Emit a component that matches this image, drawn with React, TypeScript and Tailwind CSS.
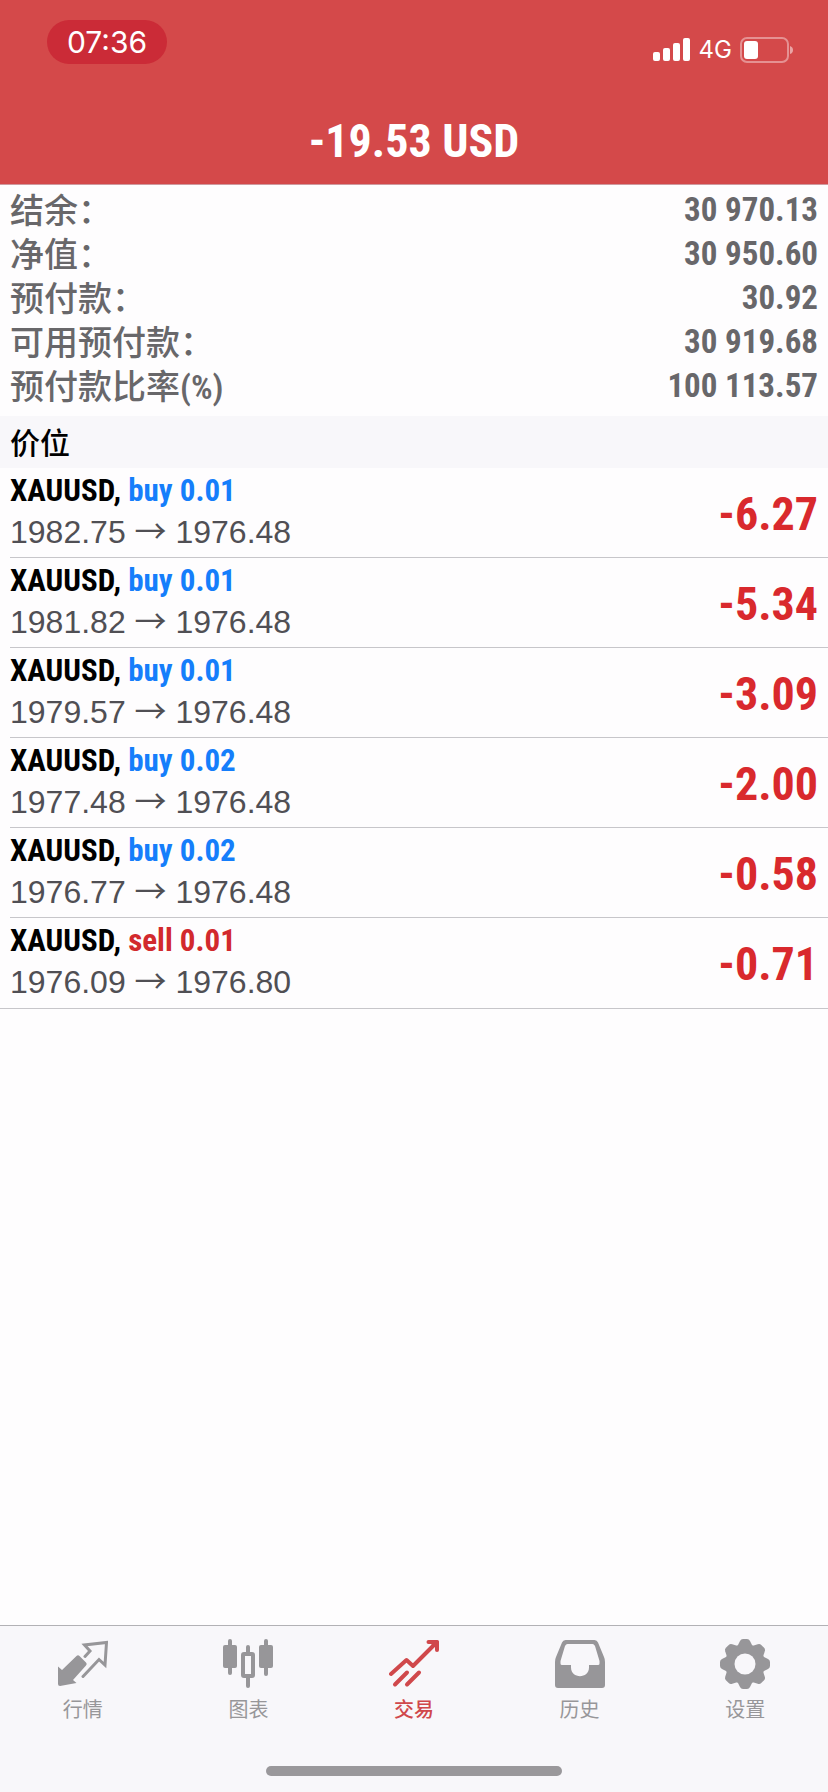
import type { ReactNode } from 'react'
import clsx from 'clsx'

const summary = [
  { label: '结余：', value: '30 970.13' },
  { label: '净值：', value: '30 950.60' },
  { label: '预付款：', value: '30.92' },
  { label: '可用预付款：', value: '30 919.68' },
  { label: '预付款比率', unit: '(%)', value: '100 113.57' },
]

const positions = [
  { id: 1, symbol: 'XAUUSD', side: 'buy', volume: '0.01', open: '1982.75', current: '1976.48', profit: '-6.27' },
  { id: 2, symbol: 'XAUUSD', side: 'buy', volume: '0.01', open: '1981.82', current: '1976.48', profit: '-5.34' },
  { id: 3, symbol: 'XAUUSD', side: 'buy', volume: '0.01', open: '1979.57', current: '1976.48', profit: '-3.09' },
  { id: 4, symbol: 'XAUUSD', side: 'buy', volume: '0.02', open: '1977.48', current: '1976.48', profit: '-2.00' },
  { id: 5, symbol: 'XAUUSD', side: 'buy', volume: '0.02', open: '1976.77', current: '1976.48', profit: '-0.58' },
  { id: 6, symbol: 'XAUUSD', side: 'sell', volume: '0.01', open: '1976.09', current: '1976.80', profit: '-0.71' },
]

function Icon({ children }: { children: ReactNode }) {
  return (
    <svg viewBox="0 0 50 50" className="h-[50px] w-[50px]" fill="currentColor" aria-hidden="true">
      {children}
    </svg>
  )
}

const QuotesIcon = () => (
  <Icon>
    <path d="M0 27.5 4 31 18.5 17Q20 15.5 21.5 17L28 23.5Q29.5 25 28 26.5L15 41 18.5 44 2 47Q0 47 0 45Z" />
    <path
      d="M27 17.5 32 12 26.5 6 48.5 3.5 47 26 41 20.5 25 37.5"
      fill="none"
      stroke="currentColor"
      strokeWidth="3"
      strokeLinecap="round"
    />
  </Icon>
)

const ChartIcon = () => (
  <Icon>
    <rect x="5" y="0" width="4" height="36" rx="2" />
    <rect x="0" y="6" width="14" height="23" rx="2" />
    <rect x="41" y="0" width="4" height="37" rx="2" />
    <rect x="36" y="6" width="14" height="23" rx="2" />
    <rect x="23" y="6" width="4" height="9" rx="2" />
    <rect x="23" y="36" width="4" height="13" rx="2" />
    <rect x="20" y="15" width="10" height="22" rx="1" fill="none" stroke="currentColor" strokeWidth="4" />
  </Icon>
)

const TradeIcon = () => (
  <Icon>
    <g fill="none" stroke="currentColor" strokeWidth="4" strokeLinecap="round" strokeLinejoin="round">
      <path d="M2 35 17.5 21 24 27 46 5" />
      <path d="M6 45.5 18 33.5M18 45.5 30 33.5" />
    </g>
    <path d="M39.5 1H48.5Q50 1 50 2.5V11Q50 13 48 13T46 11V8L42 5H39.5Q37.5 5 37.5 3T39.5 1Z" />
  </Icon>
)

const HistoryIcon = () => (
  <Icon>
    <path
      fillRule="evenodd"
      d="M10.5 1H39.5Q42 1 43 3.5L49 18Q50 20 50 23V46Q50 49 47 49H3Q0 49 0 46V23Q0 20 1 18L7 3.5Q8 1 10.5 1ZM12.5 5Q11 5 10 7L5.5 22V24.5Q5.5 26 7 26H16V28.5C16 40 34 40 34 28.5V26H43Q44.5 26 44.5 24.5V22L40 7Q39 5 37.5 5Z"
    />
  </Icon>
)

const SettingsIcon = () => (
  <Icon>
    <defs>
      <mask id="gear-hole">
        <rect width="50" height="50" fill="white" />
        <circle cx="25" cy="25" r="10.5" fill="black" />
      </mask>
    </defs>
    <g mask="url(#gear-hole)">
      <circle cx="25" cy="25" r="20" />
      {[0, 45, 90, 135, 180, 225, 270, 315].map((angle) => (
        <path
          key={angle}
          d="M17 8 20 2Q21 0 23 0H27Q29 0 30 2L33 8Z"
          transform={`rotate(${angle} 25 25)`}
        />
      ))}
    </g>
  </Icon>
)

const tabs = [
  { label: '行情', icon: <QuotesIcon /> },
  { label: '图表', icon: <ChartIcon /> },
  { label: '交易', icon: <TradeIcon />, active: true },
  { label: '历史', icon: <HistoryIcon /> },
  { label: '设置', icon: <SettingsIcon /> },
]

function StatusBar() {
  return (
    <div className="flex h-24 items-start justify-between pr-[34px] pl-[47px] font-['Inter',sans-serif]">
      <div className="mt-5 flex h-11 w-[120px] items-center justify-center rounded-full bg-[#cb2b37] text-[30px]">
        07:36
      </div>
      <div className="mt-9 flex h-7 items-center gap-2">
        <svg viewBox="0 0 38 24" className="h-6 w-[38px]" fill="currentColor" aria-hidden="true">
          <rect x="0" y="14" width="7" height="9" rx="2" />
          <rect x="10" y="10" width="7" height="13" rx="2" />
          <rect x="20" y="5" width="7" height="18" rx="2" />
          <rect x="30" y="0" width="7" height="23" rx="2" />
        </svg>
        <span className="text-2xl leading-7">4G</span>
        <svg viewBox="0 0 54 26" className="h-[26px] w-[54px]" fill="currentColor" aria-hidden="true">
          <rect x="1" y="1" width="47" height="24" rx="6" fill="none" stroke="currentColor" strokeWidth="2" opacity="0.4" />
          <rect x="4" y="4" width="14" height="18" rx="3" />
          <path d="M50 9Q53 10 53 13T50 17Z" opacity="0.5" />
        </svg>
      </div>
    </div>
  )
}

export default function App() {
  return (
    <div className="flex min-h-screen flex-col bg-[#fefdfe] font-['Roboto_Condensed','Liberation_Sans','Noto_Sans_CJK_SC',sans-serif]">
      <header className="border-b border-[#cf9a9f] bg-[#d4494a] text-white">
        <StatusBar />
        <h1 className="flex h-[88px] items-center justify-center pt-[2px] text-[46px] font-bold">-19.53 USD</h1>
      </header>

      <main className="flex-1">
        <dl className="px-[10px] pt-[2px] pb-[9px] text-[#68676a]">
          {summary.map((row) => (
            <div key={row.label} className="flex h-11 items-center justify-between">
              <dt className="font-['Noto_Sans_CJK_SC',sans-serif] text-[34px] leading-[44px] font-medium">
                {row.label}
                {row.unit && (
                  <span className="font-['Roboto_Condensed','Liberation_Sans',sans-serif] leading-none font-semibold">
                    {row.unit}
                  </span>
                )}
              </dt>
              <dd className="pt-[2px] text-[33px] leading-[42px] font-bold">{row.value}</dd>
            </div>
          ))}
        </dl>

        <h2 className="flex h-[52px] items-center bg-[#f8f7fa] px-[10px] pb-[2px] font-['Noto_Sans_CJK_SC',sans-serif] text-[30px] font-medium text-black">
          价位
        </h2>

        <ul className="border-b border-[#c7c6ca]">
          {positions.map((position) => (
            <li
              key={position.id}
              className="ml-[10px] flex items-center justify-between border-b border-[#c7c6ca] pt-px pr-[10px] pb-1 last:border-b-0 last:pb-[5px]"
            >
              <div>
                <p className="pt-[2px] text-[31px] leading-[40px] font-bold text-black">
                  {position.symbol},{' '}
                  <span className={position.side === 'buy' ? 'text-[#157efb]' : 'text-[#d2292d]'}>
                    {position.side} {position.volume}
                  </span>
                </p>
                <p className="font-['Liberation_Sans','Noto_Sans_CJK_SC',sans-serif] text-[32px] leading-[42px] text-[#504f54]">
                  {position.open} <span className="font-['Noto_Sans_CJK_SC',sans-serif] leading-none">→</span>{' '}
                  {position.current}
                </p>
              </div>
              <p className="pt-[6px] text-[46px] leading-[78px] font-bold text-[#d9292d]">{position.profit}</p>
            </li>
          ))}
        </ul>
      </main>

      <footer className="border-t border-[#b2b1b5] bg-[#f8f7fa] pb-4">
        <nav className="flex pt-[13px]">
          {tabs.map((tab) => (
            <a
              key={tab.label}
              href="#"
              aria-current={tab.active ? 'page' : undefined}
              className={clsx(
                "flex flex-1 flex-col items-center gap-[5px] font-['Noto_Sans_CJK_SC',sans-serif] text-xl leading-[30px]",
                tab.active ? 'font-medium text-[#d0484b]' : 'text-[#979699]'
              )}
            >
              {tab.icon}
              {tab.label}
            </a>
          ))}
        </nav>
        <div className="mx-auto mt-[42px] h-[10px] w-[296px] rounded-full bg-[#9a989b]" />
      </footer>
    </div>
  )
}
